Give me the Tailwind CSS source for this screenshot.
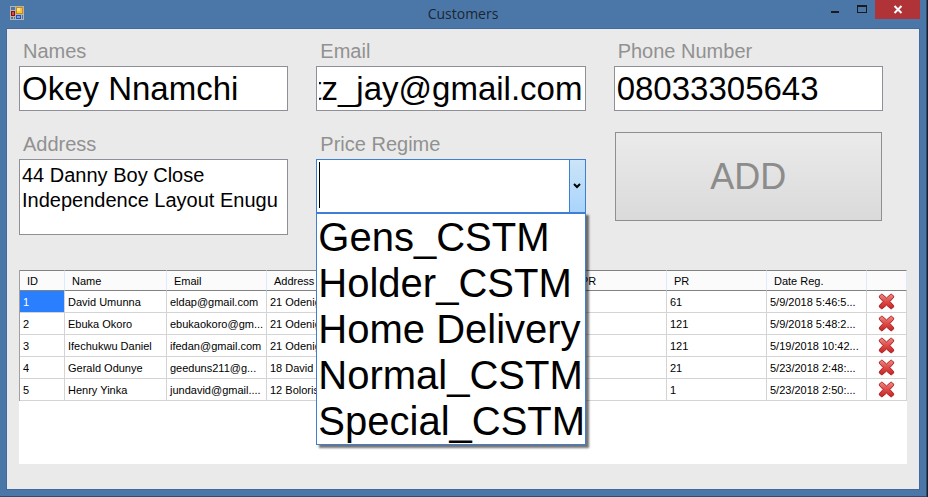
<!DOCTYPE html>
<html lang="en">

<head>
  <meta charset="UTF-8">
  <meta name="viewport" content="width=device-width, initial-scale=1.0">
  <title>Customers</title>
  <script src="https://cdn.jsdelivr.net/npm/@tailwindcss/browser@4"></script>

  <script type="module">
    const customers = [
      [1, 'David Umunna', 'eldap@gmail.com', '21 Odenig', 61, '5/9/2018 5:46:5...'],
      [2, 'Ebuka Okoro', 'ebukaokoro@gm...', '21 Odenig', 121, '5/9/2018 5:48:2...'],
      [3, 'Ifechukwu Daniel', 'ifedan@gmail.com', '21 Odenig', 121, '5/19/2018 10:42...'],
      [4, 'Gerald Odunye', 'geeduns211@g...', '18 David', 21, '5/23/2018 2:48:...'],
      [5, 'Henry Yinka', 'jundavid@gmail....', '12 Boloris', 1, '5/23/2018 2:50:...']
    ]

    const cell = 'h-[22px] border-r border-b border-[#d4d4d4] p-0 pl-[3px] whitespace-nowrap overflow-hidden'
    const selected = 'h-[22px] border-r border-b border-[#d4d4d4] p-0 pl-[3px] bg-[#2a7fff] text-white'
    const rows = document.getElementById('rows')
    const email = document.getElementById('email')

    customers.forEach(([id, name, email, address, pr, date], i) => {
      const item = `
        <tr>
          <td class="${i === 0 ? selected : cell}">${id}</td>
          <td class="${cell}">${name}</td>
          <td class="${cell}">${email}</td>
          <td class="${cell}">${address}</td>
          <td class="${cell}"></td>
          <td class="${cell}"></td>
          <td class="${cell}"></td>
          <td class="${cell}">${pr}</td>
          <td class="${cell}">${date}</td>
          <td class="h-[22px] border-r border-b border-[#d4d4d4] p-0">
            <button type="button" aria-label="Delete ${name}" class="mx-auto block size-[17px]">
              <svg viewBox="0 0 18 18" class="size-[17px]"><use href="#cross" /></svg>
            </button>
          </td>
        </tr>
        `
      rows.insertAdjacentHTML('beforeend', item)
    })

    // keep the end of a long address in view
    email.scrollLeft = email.scrollWidth
  </script>
</head>

<body class="h-screen bg-[#10202c] pr-px font-['Liberation_Sans',sans-serif]">
  <svg class="absolute size-0" aria-hidden="true">
    <defs>
      <linearGradient id="red" x1="0" y1="0" x2="0" y2="1">
        <stop offset="0" stop-color="#f08a84" />
        <stop offset="0.45" stop-color="#e0504c" />
        <stop offset="1" stop-color="#c82222" />
      </linearGradient>
      <symbol id="cross" viewBox="0 0 18 18">
        <path d="M4.6 1.4 L9 5.2 L13.4 1.4 Q14.4 1 15.2 1.9 L16.4 3.2 Q17 4.2 16.3 5 L12.6 9 L16.3 13 Q17 13.8 16.4 14.8 L15.2 16.1 Q14.4 17 13.4 16.6 L9 12.8 L4.6 16.6 Q3.6 17 2.8 16.1 L1.6 14.8 Q1 13.8 1.7 13 L5.4 9 L1.7 5 Q1 4.2 1.6 3.2 L2.8 1.9 Q3.6 1 4.6 1.4 Z" fill="url(#red)" stroke="#a0181c" />
      </symbol>
    </defs>
  </svg>

  <div class="flex h-full flex-col border-r border-b border-[#2d4c70] bg-[#4b77a8] px-[6px] pb-[6px]">
    <header class="grid h-7 shrink-0 grid-cols-[1fr_auto_1fr]">
      <svg viewBox="0 0 14 14" class="mt-[6px] ml-1 size-[14px]" shape-rendering="crispEdges">
        <path d="M0 0h14v14H0z" fill="#b4b4b0" />
        <path d="M1 1h4v3H1zM1 11h2v2H1zM4 11h1v2H4zM12 9h1v4h-1z" fill="#4b77a8" />
        <path d="M1 5h4v5H1z" fill="#8a1010" />
        <path d="M2 6h2v3H2z" fill="#d84848" />
        <path d="M6 1h7v7H6z" fill="#c98a10" />
        <path d="M7 2h5v5H7z" fill="#fbc53a" />
        <path d="M7 2h3v3H7z" fill="#ffe48a" />
        <path d="M6 9h5v4H6z" fill="#2450c0" />
        <path d="M7 10h3v2H7z" fill="#6f9cf0" />
      </svg>
      <h1 class="text-sm leading-7 text-[#1c2630] font-['Open_Sans',sans-serif]">Customers</h1>
      <div class="flex h-[19px] justify-end">
        <button type="button" aria-label="Minimize" class="w-[27px]">
          <svg viewBox="0 0 27 19" class="h-[19px] w-[27px]"><path d="M10 11h8v2h-8z" fill="#1b1b1b" /></svg>
        </button>
        <button type="button" aria-label="Maximize" class="w-[27px]">
          <svg viewBox="0 0 27 19" class="h-[19px] w-[27px]"><path d="M9 5h10v8H9zM10 7v5h8V7z" fill="#1b1b1b" fill-rule="evenodd" /></svg>
        </button>
        <button type="button" aria-label="Close" class="w-[45px] bg-[#b03437]">
          <svg viewBox="0 0 45 19" class="h-[19px] w-[45px]"><path d="M19.5 6l7 7M26.5 6l-7 7" stroke="#fff" stroke-width="2" /></svg>
        </button>
      </div>
    </header>

    <main class="flex flex-1 flex-col border border-[#44699a] bg-[#eaeaea] px-3 pt-[9px] pb-[25px]">
      <form class="mr-6 grid grid-cols-3 gap-x-7 gap-y-5 text-xl text-[#919191]">
        <div>
          <label for="names" class="block pb-[2px] pl-1 leading-[26px]">Names</label>
          <input id="names" type="text" value="Okey Nnamchi"
            class="block h-[45px] w-full border border-[#8f8f98] bg-white px-[2px] pt-[2px] text-[33px] text-black">
        </div>
        <div>
          <label for="email" class="block pb-[2px] pl-1 leading-[26px]">Email</label>
          <input id="email" type="text" value="tz_jay@gmail.com"
            class="block h-[45px] w-full border border-[#8f8f98] bg-white px-[2px] pt-[2px] text-[33px] text-black">
        </div>
        <div>
          <label for="phone" class="block pb-[2px] pl-1 leading-[26px]">Phone Number</label>
          <input id="phone" type="text" value="08033305643"
            class="block h-[45px] w-full border border-[#8f8f98] bg-white px-[2px] pt-[2px] text-[33px] text-black">
        </div>
        <div>
          <label for="address" class="block pb-[2px] pl-1 leading-[26px]">Address</label>
          <textarea id="address"
            class="block h-[76px] w-full resize-none overflow-hidden border border-[#8f8f98] bg-white px-[2px] py-[3px] leading-[25px] text-black">44 Danny Boy Close
Independence Layout Enugu</textarea>
        </div>
        <div>
          <label for="regime" class="block pb-[2px] pl-1 leading-[26px]">Price Regime</label>
          <div class="relative h-[54px] border border-[#3c7fd5]">
            <select id="regime" class="block size-full appearance-none bg-white text-[40px] text-black outline-none">
              <option selected></option>
              <option>Gens_CSTM</option>
              <option>Holder_CSTM</option>
              <option>Home Delivery</option>
              <option>Normal_CSTM</option>
              <option>Special_CSTM</option>
            </select>
            <span class="absolute top-[2px] left-[2px] h-[46px] w-px bg-black"></span>
            <span class="pointer-events-none absolute top-0 right-0 flex h-full w-4 items-center justify-center border-l border-[#3c7fd5] bg-linear-to-b from-[#cbe4f8] to-[#aad4fb]">
              <svg viewBox="0 0 8 6" class="h-[6px] w-2"><path d="M1 1l3 3 3-3" fill="none" stroke="#000" stroke-width="2" /></svg>
            </span>
            <ul role="listbox" aria-label="Price Regime"
              class="absolute -inset-x-px top-full z-10 overflow-hidden border border-t-2 border-[#3c7fd5] bg-white pl-px text-[40px] leading-[46px] whitespace-nowrap text-black shadow-[3px_3px_2px_rgba(0,0,0,0.55)]">
              <li role="option">Gens_CSTM</li>
              <li role="option">Holder_CSTM</li>
              <li role="option">Home Delivery</li>
              <li role="option">Normal_CSTM</li>
              <li role="option">Special_CSTM</li>
            </ul>
          </div>
        </div>
        <button type="submit"
          class="mx-px mt-px h-[89px] border border-[#8f8f8f] bg-linear-to-b from-[#ebebeb] to-[#dadada] text-4xl text-[#8c8c8c]">ADD</button>
      </form>

      <section class="mt-[35px] flex-1 bg-white">
        <table class="w-full table-fixed border-separate border-spacing-0 border-l border-[#a0a0a0] text-left text-[11px] leading-4 text-black">
          <colgroup>
            <col class="w-[45px]">
            <col class="w-[102px]">
            <col>
            <col>
            <col>
            <col>
            <col>
            <col>
            <col>
            <col class="w-10">
          </colgroup>
          <thead class="bg-[#fbfbfb]">
            <tr>
              <th class="h-[21px] border-y border-r border-y-[#828282] border-r-[#dcebfc] p-0 pl-[7px] font-normal">ID</th>
              <th class="border-y border-r border-y-[#828282] border-r-[#dcebfc] p-0 pl-[7px] font-normal">Name</th>
              <th class="border-y border-r border-y-[#828282] border-r-[#dcebfc] p-0 pl-[7px] font-normal">Email</th>
              <th class="border-y border-r border-y-[#828282] border-r-[#dcebfc] p-0 pl-[7px] font-normal">Address</th>
              <th class="border-y border-r border-y-[#828282] border-r-[#dcebfc] p-0"></th>
              <th class="border-y border-r border-y-[#828282] border-r-[#dcebfc] p-0"></th>
              <th class="border-y border-r border-y-[#828282] border-r-[#dcebfc] p-0 pl-[14px] font-normal">PR</th>
              <th class="border-y border-r border-y-[#828282] border-r-[#dcebfc] p-0 pl-[7px] font-normal">PR</th>
              <th class="border-y border-r border-y-[#828282] border-r-[#dcebfc] p-0 pl-[7px] font-normal">Date Reg.</th>
              <th class="border-y border-r border-y-[#828282] border-r-[#dcebfc] p-0"></th>
            </tr>
          </thead>
          <tbody id="rows"></tbody>
        </table>
      </section>
    </main>
  </div>
</body>

</html>
